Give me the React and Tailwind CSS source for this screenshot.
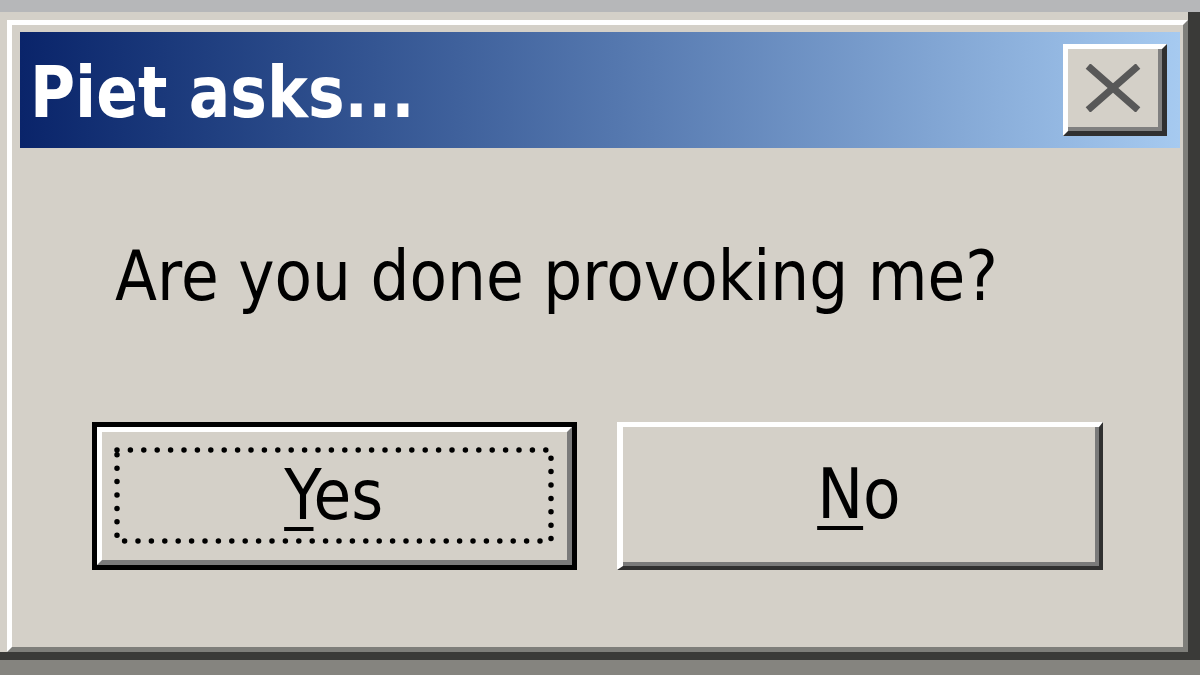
import React from "react";

const font = { fontFamily: '"DejaVu Sans", Verdana, sans-serif' };

function CloseButton() {
  return (
    <div className="w-[104px] h-[92px] shrink-0 border-t-[5px] border-l-[5px] border-t-white border-l-white border-r-[5px] border-b-[5px] border-r-[#303030] border-b-[#303030] bg-[#d4d0c8]">
      <div className="w-full h-full border-r-[4px] border-b-[4px] border-[#808080] flex items-center justify-center">
        <svg width="56" height="48" viewBox="0 0 56 48">
          <path d="M3 2 L53 46 M53 2 L3 46" stroke="#585858" strokeWidth="7" strokeLinecap="butt" fill="none" />
        </svg>
      </div>
    </div>
  );
}

export default function App() {
  return (
    <div className="w-[1200px] h-[675px] overflow-hidden flex flex-col bg-[#b6b7b9]" style={font}>
      <div className="h-[12px] shrink-0 bg-[#b6b7b9]" />
      {/* window outer frame */}
      <div className="h-[648px] shrink-0 bg-[#d4d0c8] pt-[8px] pl-[7px] border-r-[12px] border-b-[8px] border-r-[#3a3a38] border-b-[#3a3a38]">
        <div className="h-full border-t-[5px] border-l-[5px] border-t-white border-l-white border-r-[5px] border-b-[5px] border-r-[#7e7e7a] border-b-[#7e7e7a] pt-[7px] pl-[8px] pr-[3px] flex flex-col">
          {/* title bar */}
          <div className="h-[116px] shrink-0 flex items-center justify-between pl-[10px] pr-[13px] bg-gradient-to-r from-[#0a246a] to-[#a6caf0]">
            <div className="text-[71px] leading-[71px] font-bold text-white origin-left scale-x-[0.867] whitespace-nowrap mt-[4px]">
              Piet asks...
            </div>
            <CloseButton />
          </div>
          {/* body */}
          <div className="flex-1 flex flex-col">
            <div className="mt-[94px] pl-[95px]">
              <div className="text-[69px] leading-[69px] text-black whitespace-nowrap origin-left scale-x-[0.89]">
                Are you done provoking me?
              </div>
            </div>
            <div className="mt-[111px] pl-[72px] flex gap-[40px]">
              {/* Yes (default, focused) */}
              <div className="w-[485px] h-[148px] border-[5px] border-black flex">
                <div className="flex-1 flex border-t-[5px] border-l-[5px] border-t-white border-l-white border-r-[5px] border-b-[5px] border-r-[#7a7a7a] border-b-[#7a7a7a] bg-[#d4d0c8] pt-[18px] pl-[15px] pr-[16px] pb-[19px]">
                  <div className="relative flex-1 flex items-center justify-center">
                    <svg className="absolute inset-0 w-full h-full overflow-visible" preserveAspectRatio="none">
                      <rect x="0" y="0" width="100%" height="100%" fill="none" stroke="#000" strokeWidth="5.5" strokeDasharray="0 13.4" strokeLinecap="round" />
                    </svg>
                    <div className="text-[69px] leading-[69px] text-black scale-x-[0.89] whitespace-nowrap">
                      <span className="underline decoration-[4px] underline-offset-[8px]">Y</span>es
                    </div>
                  </div>
                </div>
              </div>
              {/* No */}
              <div className="w-[486px] h-[148px] flex border-t-[5px] border-l-[6px] border-t-white border-l-white border-r-[4px] border-b-[4px] border-r-[#303030] border-b-[#303030] bg-[#d4d0c8]">
                <div className="flex-1 flex items-center justify-center border-r-[4px] border-b-[4px] border-[#7a7a7a]">
                  <div className="text-[69px] leading-[69px] text-black scale-x-[0.89] whitespace-nowrap">
                    <span className="underline decoration-[4px] underline-offset-[8px]">N</span>o
                  </div>
                </div>
              </div>
            </div>
          </div>
        </div>
      </div>
      <div className="flex-1 bg-[#85847f]" />
    </div>
  );
}
